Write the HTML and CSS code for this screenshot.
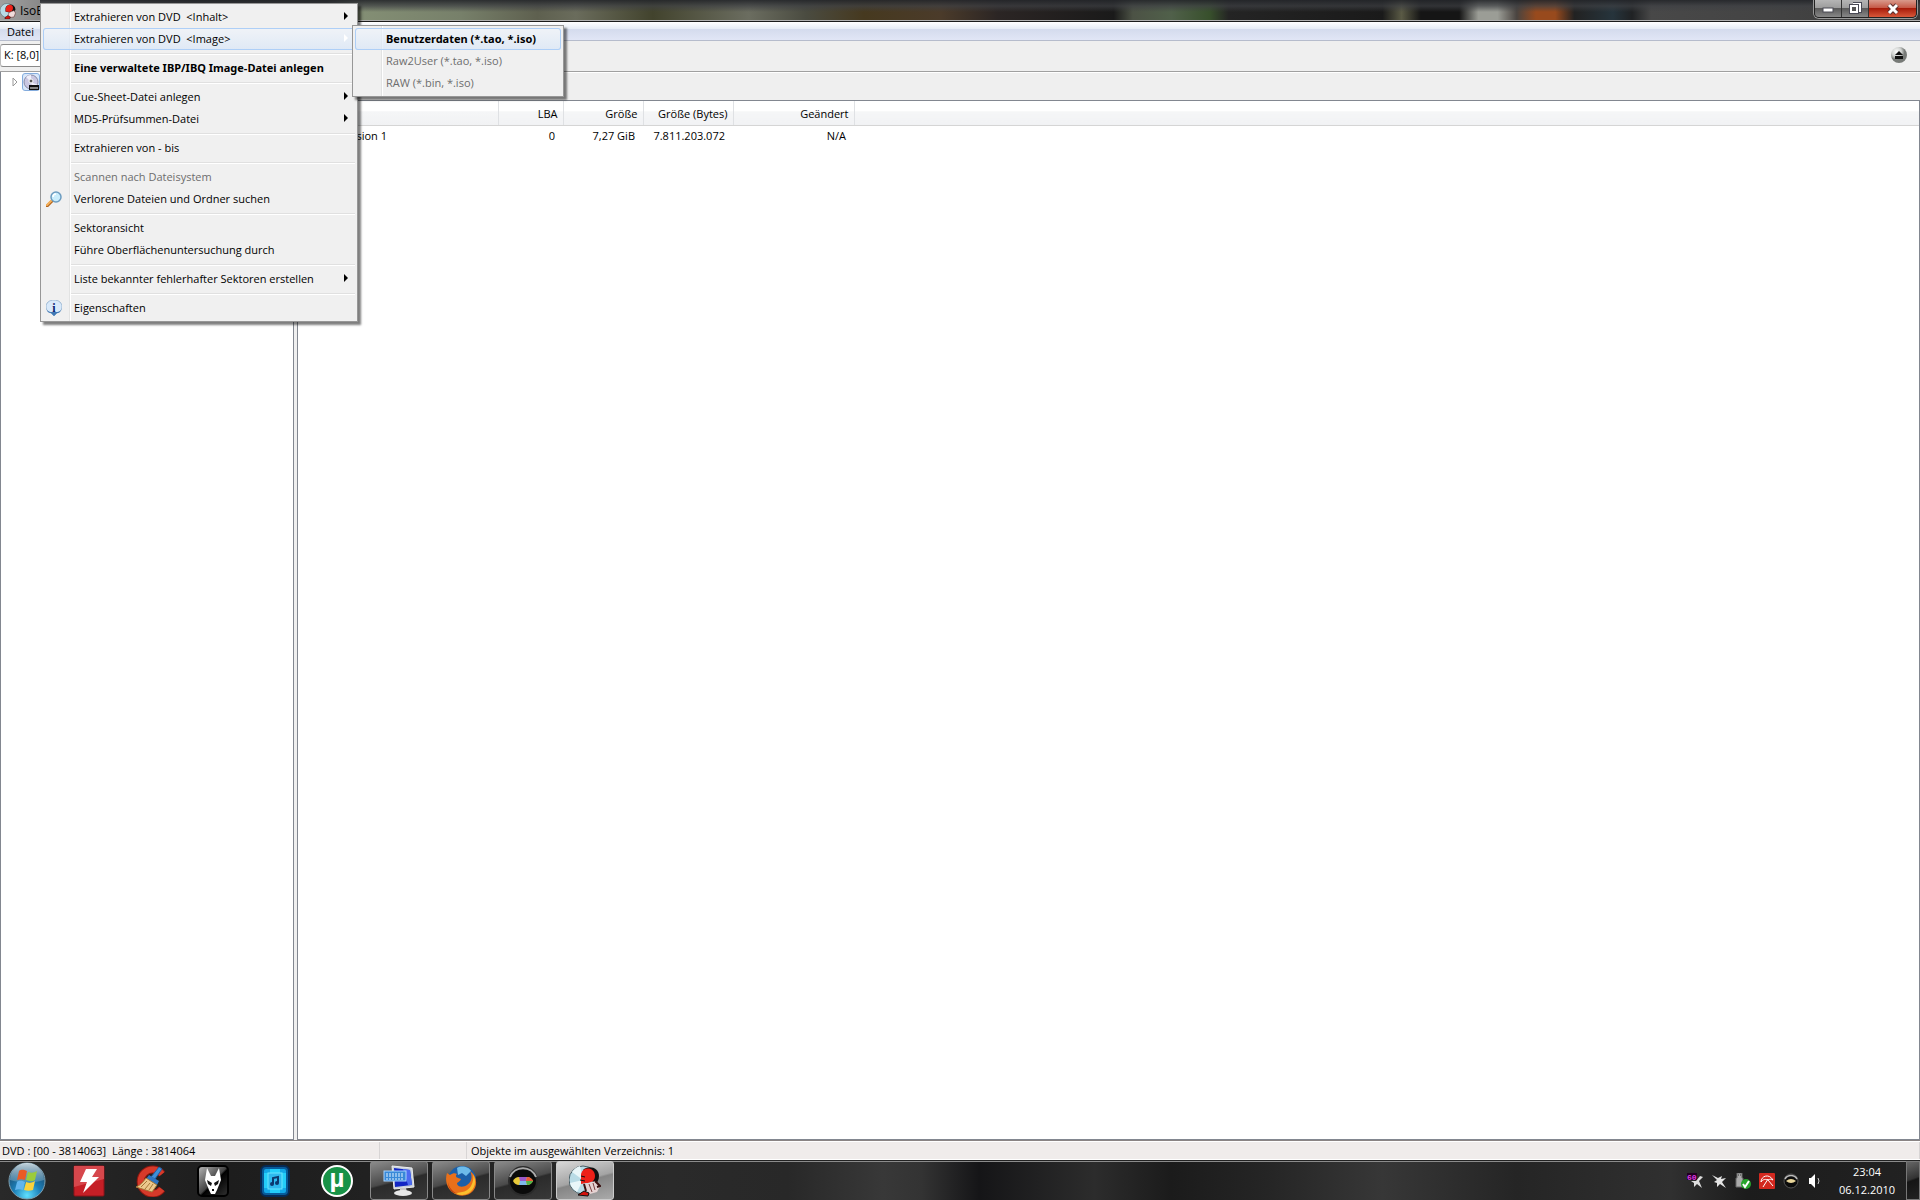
FILE: index.html
```html
<!DOCTYPE html>
<html lang="de">
<head>
  <meta charset="UTF-8">
  <meta name="viewport" content="width=device-width, initial-scale=1">
  <title>IsoBuster</title>
  <link rel="stylesheet" href="styles.css">
</head>
<body>

  <header class="titlebar">
    <svg class="app-icon" width="16" height="16" viewBox="0 0 32 32">
      <circle cx="14" cy="15" r="14" fill="#b9dbe6" stroke="#4b5f66"/>
      <path d="M11 10c3-10 19-10 20 3l-4 7-3-4-6 3-7-2z" fill="#111"/>
      <path d="M12 9c3-8 14-7 14 1 0 5-3 7-7 8l-8-1z" fill="#ee2018"/>
      <path d="M18 19l10-4 3 5-3 8-9 1-3-4z" fill="#f0dcdc" stroke="#5b2020"/>
      <path d="M10 29l6-4 5 3-2 4h-9z" fill="#d4120c" stroke="#111"/>
    </svg>
    <h1>IsoBuster</h1>
    <div class="window-buttons">
      <button class="minimize" aria-label="Minimieren">
        <svg width="12" height="10" viewBox="0 0 12 10"><rect x="1" y="4" width="10" height="4" fill="#fff" stroke="#4a4a55"/></svg>
      </button>
      <button class="restore" aria-label="Verkleinern">
        <svg width="13" height="13" viewBox="0 0 13 13"><path d="M4 2h7v7h-2" fill="none" stroke="#4a4a55" stroke-width="4"/><path d="M4 2h7v7h-2" fill="none" stroke="#fff" stroke-width="2"/><rect x="2" y="4" width="6" height="6" fill="#777" stroke="#4a4a55" stroke-width="4"/><rect x="2" y="4" width="6" height="6" fill="#555" stroke="#fff" stroke-width="2"/></svg>
      </button>
      <button class="close" aria-label="Schließen">
        <svg width="14" height="12" viewBox="0 0 14 12"><path d="M3 2l8 8M11 2l-8 8" stroke="#5a3030" stroke-width="5"/><path d="M3 2l8 8M11 2l-8 8" stroke="#fff" stroke-width="3"/></svg>
      </button>
    </div>
  </header>

  <nav class="menubar">
    <button>Datei</button>
  </nav>

  <div class="toolbar">
    <select class="drive" aria-label="Laufwerk">
      <option>K: [8,0]</option>
    </select>
    <button class="eject" aria-label="Auswerfen">
      <svg width="16" height="17" viewBox="0 0 16 17">
        <defs><radialGradient id="ejectBall" cx="35%" cy="30%"><stop offset="0" stop-color="#fff"/><stop offset="0.600" stop-color="#d0d2d0"/><stop offset="1" stop-color="#777a77"/></radialGradient></defs>
        <circle cx="8" cy="8" r="8" fill="url(#ejectBall)"/>
        <path d="M8 4l4 4H4zM4 9h8v3H4z" fill="#111"/>
      </svg>
    </button>
  </div>

  <main class="panes">
    <section class="tree">
      <div class="tree-item">
        <svg width="6" height="10" viewBox="0 0 6 10"><path d="M1 1l4 4-4 4z" fill="#fff" stroke="#999"/></svg>
        <span class="tree-disc">
          <svg width="16" height="16" viewBox="0 0 16 16">
            <circle cx="8" cy="8" r="7" fill="#c9c7e2" stroke="#8b8ba5"/>
            <path d="M8 8L3 3a7 7 0 0 1 5-2zM8 8l7 3a7 7 0 0 1-5 3z" fill="#f0effa"/>
            <circle cx="8" cy="7" r="2" fill="#555" stroke="#fff"/>
            <path d="M6 11h10v5H6z" fill="#111"/>
            <path d="M8 13v2M10 13v2M12 13v2M14 13v2" stroke="#fff"/>
          </svg>
        </span>
      </div>
    </section>

    <section class="content">
      <div class="pathbar"></div>
      <div class="files">
        <table>
          <colgroup>
            <col class="col-name"><col class="col-lba"><col class="col-size"><col class="col-bytes"><col class="col-date"><col>
          </colgroup>
          <thead>
            <tr><th></th><th>LBA</th><th>Größe</th><th>Größe (Bytes)</th><th>Geändert</th><th></th></tr>
          </thead>
          <tbody>
            <tr><td>Session 1</td><td>0</td><td>7,27 GiB</td><td>7.811.203.072</td><td>N/A</td><td></td></tr>
          </tbody>
        </table>
      </div>
    </section>
  </main>

  <footer class="statusbar">
    <span class="status-disc">DVD : [00 - 3814063]&nbsp; Länge : 3814064</span>
    <span class="status-empty"></span>
    <span class="status-count">Objekte im ausgewählten Verzeichnis: 1</span>
  </footer>

  <div class="menu context-menu">
    <button class="submenu">Extrahieren von DVD&nbsp; &lt;Inhalt&gt;</button>
    <button class="submenu active">Extrahieren von DVD&nbsp; &lt;Image&gt;</button>
    <hr>
    <button class="default">Eine verwaltete IBP/IBQ Image-Datei anlegen</button>
    <hr>
    <button class="submenu">Cue-Sheet-Datei anlegen</button>
    <button class="submenu">MD5-Prüfsummen-Datei</button>
    <hr>
    <button>Extrahieren von - bis</button>
    <hr>
    <button disabled>Scannen nach Dateisystem</button>
    <button>
      <svg width="16" height="16" viewBox="0 0 16 16">
        <path d="M1 15l6-6" stroke="#b5651d" stroke-width="3" stroke-linecap="round"/>
        <path d="M1 14l5-5" stroke="#f5b25c" stroke-width="2" stroke-linecap="round"/>
        <circle cx="10" cy="6" r="5" fill="#c9ecfb" stroke="#6c9cc0" stroke-width="1.500"/>
        <path d="M7 6a3 3 0 0 1 3-3" fill="none" stroke="#fff" stroke-width="1.500"/>
      </svg>
      Verlorene Dateien und Ordner suchen
    </button>
    <hr>
    <button>Sektoransicht</button>
    <button>Führe Oberflächenuntersuchung durch</button>
    <hr>
    <button class="submenu">Liste bekannter fehlerhafter Sektoren erstellen</button>
    <hr>
    <button>
      <svg width="16" height="16" viewBox="0 0 16 16">
        <path d="M8 0c5 0 8 3 8 7 0 3-2 5-5 6l-3 3-3-3C2 12 0 10 0 7c0-4 3-7 8-7z" fill="#d8e9fa" stroke="#9db9d4"/>
        <path d="M1 10c2 2 3 2 5 2h4c2 0 3 0 5-2-1 3-3 3-4 3l-3 3-3-3c-2 0-4-1-4-3z" fill="#3f78b4"/>
        <text x="8" y="12" text-anchor="middle" class="info-letter">i</text>
      </svg>
      Eigenschaften
    </button>
  </div>

  <div class="menu image-menu">
    <button class="default active">Benutzerdaten (*.tao, *.iso)</button>
    <button disabled>Raw2User (*.tao, *.iso)</button>
    <button disabled>RAW (*.bin, *.iso)</button>
  </div>

  <div class="taskbar">
    <button class="start" aria-label="Start">
      <svg width="40" height="38" viewBox="0 0 40 38">
        <defs>
          <radialGradient id="orb" cx="50%" cy="90%" r="85%"><stop offset="0" stop-color="#5fe0ff"/><stop offset="0.450" stop-color="#1c7fb8"/><stop offset="1" stop-color="#1b3e5c"/></radialGradient>
          <linearGradient id="orbShine" x1="0" y1="0" x2="0" y2="1"><stop offset="0" stop-color="#e4f0f5" stop-opacity="0.850"/><stop offset="1" stop-color="#8fb9cc" stop-opacity="0.350"/></linearGradient>
        </defs>
        <circle cx="20" cy="19" r="18" fill="url(#orb)" stroke="#7fa0b0"/>
        <path d="M3 18a17 17 0 0 1 34 0c-8 3-25 3-34 0z" fill="url(#orbShine)"/>
        <path d="M12 9c3-2 5-1 8 0l-2 9c-3-1-5-1-8 0z" fill="#ea5a24"/>
        <path d="M21 10c3 1 6 1 9-1l-2 9c-3 2-6 1-9 0z" fill="#9bcb3c"/>
        <path d="M10 20c3-2 5-1 8 0l-2 8c-3-1-5-1-8 0z" fill="#62b5ee"/>
        <path d="M19 20c3 1 6 1 9-1l-2 9c-3 1-6 1-9 0z" fill="#fbd23c"/>
      </svg>
    </button>

    <div class="pinned">
      <button aria-label="Flash">
        <svg width="32" height="32" viewBox="0 0 32 32">
          <rect x="1" y="1" width="30" height="30" rx="1" fill="#c51f26" stroke="#8c1318"/>
          <path d="M1 1h30v13L1 22z" fill="#d6474c"/>
          <path d="M13 4h11l-5 8h7L10 28l4-11H7z" fill="#fff"/>
        </svg>
      </button>
      <button aria-label="CCleaner">
        <svg width="32" height="32" viewBox="0 0 32 32">
          <path d="M27 9a12 12 0 1 0 0 15" fill="none" stroke="#8e1710" stroke-width="8"/>
          <path d="M27 9a12 12 0 1 0 0 15" fill="none" stroke="#d63a2a" stroke-width="6"/>
          <path d="M24 2l3 2-7 10-4-2z" fill="#3e8fd8" stroke="#1f5d9c"/>
          <path d="M14 10l10 6-2 4-11-6z" fill="#2f74bf"/>
          <path d="M11 13l11 7-5 7L1 22c5-2 7-5 10-9z" fill="#ecc88c" stroke="#a57838"/>
          <path d="M6 22l6-6M10 24l5-6M14 25l4-6" stroke="#a57838"/>
        </svg>
      </button>
      <button aria-label="foobar2000">
        <svg width="32" height="32" viewBox="0 0 32 32">
          <defs><linearGradient id="foo" x1="0" y1="0" x2="1" y2="1"><stop offset="0" stop-color="#bbb"/><stop offset="0.500" stop-color="#444"/><stop offset="0.550" stop-color="#000"/><stop offset="1" stop-color="#333"/></linearGradient></defs>
          <rect x="1" y="1" width="30" height="30" rx="4" fill="url(#foo)" stroke="#000" stroke-width="2"/>
          <path d="M10 3l4 8h4l4-8 2 12-4 10-2 4h-4l-2-4-4-10z" fill="#fff"/>
          <path d="M10 15l5 3-1 3-3-2zM22 15l-5 3 1 3 3-2z" fill="#111"/>
          <path d="M15 24h2v2h-2z" fill="#111"/>
        </svg>
      </button>
      <button aria-label="Musik">
        <svg width="32" height="32" viewBox="0 0 32 32">
          <rect x="2" y="1" width="28" height="30" rx="5" fill="#075c9b" stroke="#062a55" stroke-width="2"/>
          <rect x="5" y="4" width="22" height="24" rx="2" fill="#12a7e8"/>
          <path d="M11 4h10v4h6v15h-6v5H11v-5H5V8h6z" fill="#23cdfa"/>
          <rect x="9" y="8" width="14" height="16" fill="#2eb9ef" stroke="#6be5ff"/>
          <path d="M14 19v-6l5-1v6" fill="none" stroke="#0b3970" stroke-width="2"/>
          <circle cx="13" cy="19" r="2" fill="#0b3970"/><circle cx="18" cy="18" r="2" fill="#0b3970"/>
        </svg>
      </button>
      <button aria-label="µTorrent">
        <svg class="torrent" width="32" height="32" viewBox="0 0 32 32">
          <circle cx="16" cy="16" r="15" fill="#189247" stroke="#fff" stroke-width="2"/>
          <text x="16" y="22" text-anchor="middle" class="torrent-letter">µ</text>
        </svg>
      </button>
    </div>

    <div class="tasks">
      <button aria-label="Bildschirmtastatur">
        <svg width="32" height="32" viewBox="0 0 32 32">
          <path d="M9 1l20 2 2 19-20 2z" fill="#c9d2dc" stroke="#eee"/>
          <path d="M11 3l16 2 2 15-17 2z" fill="#1226c4"/>
          <path d="M20 4l7 1 2 15-4 0z" fill="#4c6bf0"/>
          <path d="M17 23h6l1 4h-7z" fill="#c8c8c8"/>
          <ellipse cx="20" cy="28" rx="9" ry="3" fill="#e8e8e8"/>
          <rect x="1" y="6" width="22" height="10" fill="#3889d8" stroke="#a8d4ff"/>
          <path d="M3 9h18M3 11h18M3 14h18" stroke="#e4f3ff" stroke-dasharray="2 1"/>
        </svg>
      </button>
      <button aria-label="Firefox">
        <svg width="32" height="32" viewBox="0 0 32 32">
          <circle cx="17" cy="15" r="14" fill="#1c5fa8"/>
          <path d="M12 3c5-3 12-1 14 3l-5 5-4-3-4 2z" fill="#6dbbea"/>
          <path d="M2 8l3 2c3-2 5-2 7-1-2 2-1 3 1 4l3 1c-1 3-4 3-4 5 2 4 7 3 10 1 6-4 5-10 3-14 7 5 8 14 3 20-5 6-15 6-21 1C1 22 0 14 2 8z" fill="#e9701a"/>
          <path d="M28 9c4 7 2 15-4 19-5 3-11 2-15 0 8 0 14-2 17-7 2-4 3-8 2-12z" fill="#fbc02d"/>
          <path d="M3 17c1 6 5 10 10 12-5 0-10-5-10-12z" fill="#b93b10"/>
        </svg>
      </button>
      <button aria-label="Rainlendar">
        <svg width="32" height="32" viewBox="0 0 32 32">
          <circle cx="16" cy="16" r="14" fill="#0a0a0a" stroke="#2a2a2a" stroke-width="2"/>
          <path d="M3 12a14 14 0 0 1 26 0" fill="none" stroke="#aaa" stroke-width="2"/>
          <path d="M6 16q2-4 6-4h8q4 0 6 4-2 4-6 4h-8q-4 0-6-4z" fill="#e8c93a"/>
          <path d="M12 12h8l-1 4h-6z" fill="#9a58c8"/>
          <path d="M20 12q4 0 6 4h-7z" fill="#e85a3a"/>
          <path d="M13 16h6l1 4h-8z" fill="#7fb8ec"/>
          <path d="M19 16h7q-2 4-6 4z" fill="#51b44a"/>
        </svg>
      </button>
      <button class="current" aria-label="IsoBuster">
        <svg width="32" height="32" viewBox="0 0 32 32">
          <circle cx="14" cy="15" r="14" fill="#b9dbe6" stroke="#4b5f66"/>
          <path d="M14 15L3 7a14 14 0 0 1 8-6zM14 15l-6 12a14 14 0 0 1-7-9z" fill="#e9f6f9"/>
          <path d="M14 5c5-5 16-3 16 6 0 4-2 7-4 8l-4-4z" fill="#111"/>
          <path d="M12 9c2-8 14-7 14 2 0 5-4 7-9 7l-5 1z" fill="#ee2018"/>
          <path d="M11 15l5 1M12 11l4 1" stroke="#111" stroke-width="1"/>
          <path d="M15 19l6-1 5-2 5 5-3 6-7 2-5-5z" fill="#e6d2d2"/>
          <path d="M15 19l2 7M26 16l5 5-3 1" fill="none" stroke="#3a1010" stroke-width="2"/>
          <path d="M20 19l3 8M24 18l2 7" fill="none" stroke="#7a4040"/>
          <path d="M9 30l6-4 5 2-1 3z" fill="#d4120c" stroke="#111"/>
        </svg>
      </button>
    </div>

    <div class="tray">
      <svg width="16" height="16" viewBox="0 0 16 16">
        <path d="M16 4l-4 4 3 7-5-4-3 3v-4l-3-2h5l4-5z" fill="#ddd"/>
        <rect width="10" height="7" fill="#210021"/>
        <text x="0" y="7" class="fps">60</text>
      </svg>
      <svg width="16" height="16" viewBox="0 0 16 16"><path d="M1 2l6 3 4-2-1 3 5-1-4 4 4 6-6-4-3 3v-4l-3-1 3-2z" fill="#e4e4e4"/></svg>
      <svg width="16" height="16" viewBox="0 0 16 16">
        <path d="M2 0h5v5h1v9H1V5h1z" fill="#aaa" stroke="#666"/><path d="M3 2h1M5 2h1" stroke="#333"/>
        <circle cx="11" cy="11" r="5" fill="#27a52b"/><path d="M8 11l2 3 4-6" fill="none" stroke="#fff" stroke-width="2"/>
      </svg>
      <svg width="16" height="16" viewBox="0 0 16 16">
        <rect width="16" height="16" rx="1" fill="#d3281f"/>
        <path d="M2 9C2 3 10 0 14 7c-2-1-3-1-5 0C7 6 4 6 2 9z" fill="none" stroke="#fff"/>
        <path d="M9 6l-5 8M9 7l5 6" fill="none" stroke="#fff"/>
      </svg>
      <svg width="16" height="16" viewBox="0 0 16 16">
        <circle cx="8" cy="8" r="7" fill="#0b0b0b" stroke="#555"/>
        <path d="M2 6a7 7 0 0 1 12 0" fill="none" stroke="#bbb" stroke-width="1.500"/>
        <path d="M3 8q5-4 10 0-5 4-10 0z" fill="#e9d69a"/>
      </svg>
      <svg width="16" height="16" viewBox="0 0 16 16"><path d="M2 5h2l4-4v14l-4-4H2z" fill="#fff"/><path d="M11 5q2 3 0 6" fill="none" stroke="#ccc"/></svg>
    </div>
    <div class="clock"><time>23:04</time><time>06.12.2010</time></div>
    <button class="show-desktop" aria-label="Desktop anzeigen"></button>
  </div>

</body>
</html>
```
FILE: styles.css
```css
* {
  box-sizing: border-box;
}

body {
  display: flex;
  flex-direction: column;
  height: 100vh;
  margin: 0;
  overflow: hidden;
  background: #efefef;
  color: #000;
  font-family: "Open Sans", "Noto Sans", sans-serif;
  font-size: 11px;
  line-height: 18px;
}

button, select {
  margin: 0;
  padding: 0;
  border: 0;
  background: none;
  color: inherit;
  font: inherit;
}

svg {
  display: block;
  flex: none;
}

/* title bar */
.titlebar {
  display: flex;
  height: 22px;
  flex: none;
  border-bottom: 1px solid #1b1b1b;
  box-shadow: inset 0 -1px #b0b0b0;
  background:
    linear-gradient(to bottom, rgba(36, 38, 42, 0.9) 0, rgba(62, 64, 68, 0.7) 6px, rgba(60, 60, 60, 0) 12px) 40px 0 no-repeat,
    linear-gradient(to right, #a0a0a0 0%, #8a8a8a 2%, #222 10%, #222 17%, #838e74 19%, #77806a 24%, #5e604f 28%, #6a6c5c 30%, #42432d 34%, #6b6d60 39%, #4a4b40 42%, #46391f 45%, #4b3b2a 49%, #2b2524 52%, #1a1a1a 58%, #4c5245 59%, #50604a 61%, #38502c 63%, #242424 64%, #1a1a1a 72%, #5a5a45 73%, #151515 74%, #151515 76%, #9b9d96 77%, #9b9d96 78%, #4a4440 79%, #984a1d 80%, #984a1d 81%, #222 82%, #26343c 84%, #202224 85%, #484848 86%, #444 92%, #3a3a3a 100%);
}

.app-icon {
  margin: 3px 4px 0 0;
}

h1 {
  margin: 2px 0 0;
  font-size: 12px;
  font-weight: normal;
}

.window-buttons {
  display: flex;
  height: 18px;
  margin: 0 3px 0 auto;
  border: 1px solid #222;
  border-top: 0;
  border-radius: 0 0 5px 5px;
  box-shadow: 0 0 0 1px #999;
  overflow: hidden;
}

.window-buttons button {
  display: grid;
  place-items: center;
  width: 27px;
  border-right: 1px solid #333;
  background: linear-gradient(#b5b5b5, #9d9d9d 45%, #5b5b5b 50%, #888);
}

.window-buttons .close {
  width: 47px;
  border: 0;
  background: linear-gradient(#d99a8c, #c65a48 45%, #a81c0a 50%, #d8583a);
}

/* menu bar and tool bars */
.menubar {
  display: flex;
  height: 19px;
  flex: none;
  padding-top: 1px;
  border-bottom: 1px solid #b6bccc;
  background: linear-gradient(#fff, #e5ebf5 7px, #d4dbed 7px, #e1e6f6);
}

.menubar button {
  padding: 0 7px;
}

.toolbar {
  display: flex;
  align-items: center;
  justify-content: space-between;
  height: 31px;
  flex: none;
  padding: 0 13px 2px 0;
  border-bottom: 1px solid #a0a0a0;
}

.drive {
  width: 300px;
  height: 23px;
  padding-left: 3px;
  border: 1px solid #8a8a8a;
  border-left-color: #bbb;
  border-radius: 3px;
  background: #fff;
  appearance: none;
}

/* tree and file list */
.panes {
  display: flex;
  flex: 1;
  gap: 3px;
  border-bottom: 1px solid #8a8484;
}

.tree {
  width: 294px;
  padding-top: 1px;
  border: 1px solid #828790;
  border-top: 0;
  background: #fff;
}

.tree-item {
  display: flex;
  align-items: center;
  gap: 4px;
  padding-left: 11px;
}

.tree-disc {
  border: 1px solid #84acdd;
  border-radius: 3px;
  background: #d9e8fb;
}

.content {
  display: flex;
  flex: 1;
  flex-direction: column;
}

.pathbar {
  height: 28px;
  border-top: 1px solid #fff;
}

.files {
  flex: 1;
  border: 1px solid #828790;
  background: #fff;
}

table {
  width: 100%;
  table-layout: fixed;
  border-collapse: collapse;
}

.col-name { width: 200px; }
.col-lba { width: 65px; }
.col-size { width: 80px; }
.col-bytes { width: 90px; }
.col-date { width: 121px; }

th, td {
  height: 24px;
  padding: 2px 5px 0;
  font-weight: normal;
  text-align: right;
  white-space: nowrap;
}

th {
  border-right: 1px solid #dfe1e4;
  border-bottom: 1px solid #d5d5d5;
  background: linear-gradient(#fff 40%, #f5f6f7 45%, #f1f2f4);
}

th:last-child {
  border-right: 0;
}

td {
  height: 22px;
  padding: 0 8px;
}

td:first-child {
  padding-left: 41px;
  text-align: left;
}

/* status bar */
.statusbar {
  display: flex;
  height: 19px;
  flex: none;
  border-top: 1px solid #fff;
  border-bottom: 1px solid #fff;
  background: #f0eceb;
}

.statusbar span {
  padding-left: 4px;
  border-right: 1px solid #d8d5d5;
}

.statusbar .status-disc {
  width: 380px;
  padding-left: 2px;
}

.statusbar .status-empty {
  width: 87px;
}

.statusbar .status-count {
  flex: 1;
}

/* popup menus */
.menu {
  position: absolute;
  display: flex;
  flex-direction: column;
  padding: 2px;
  border: 1px solid #979797;
  background: linear-gradient(to right, transparent 28px, #e2e3e3 28px, #e2e3e3 29px, #fff 29px, #fff 30px, transparent 30px) #f0f0f0;
  box-shadow: 3px 3px 2px rgba(0, 0, 0, 0.5);
}

.context-menu {
  top: 3px;
  left: 40px;
  width: 318px;
}

.image-menu {
  top: 25px;
  left: 352px;
  width: 212px;
}

.menu button {
  display: flex;
  align-items: center;
  height: 22px;
  padding-left: 31px;
  border-radius: 3px;
  text-align: left;
  white-space: nowrap;
}

.menu button:disabled {
  color: #6d6d6d;
}

.menu .default {
  font-family: "Noto Sans", "Open Sans", sans-serif;
  font-weight: bold;
}

.menu .active {
  background: linear-gradient(rgba(240, 245, 252, 0.6), rgba(216, 230, 248, 0.7));
  box-shadow: inset 0 0 0 1px #aecff7;
}

.menu svg {
  margin: 0 12px 0 -28px;
}

.submenu::after {
  width: 0;
  margin: 0 7px 2px auto;
  border: 4px solid transparent;
  border-right: 0;
  border-left-color: #000;
  content: "";
}

.submenu.active::after {
  border-left-color: #fff;
}

.menu hr {
  width: auto;
  height: 2px;
  margin: 3px 0 2px 28px;
  border: 0;
  border-top: 1px solid #e0e0e0;
  background: #fff;
}

.info-letter {
  fill: #0b1e70;
  font: bold 12px "Liberation Serif", serif;
}

/* taskbar */
.taskbar {
  display: flex;
  height: 40px;
  flex: none;
  border-top: 1px solid #222;
  box-shadow: inset 0 1px #8b8b8b;
  background: linear-gradient(to right, #292929, #1d1d1d 12%, #2a2a2a 35%, #282828 41%, #383838 46%, #333 48%, #151517 51%, #2c2c2c 57%, #1b1b1b 61%, #252525 66%, #373737 72%, #252525 79%, #303030 87%, #1c1c1c 91%, #222);
}

.start {
  margin-left: 7px;
}

.pinned {
  display: flex;
  gap: 30px;
  margin-left: 26px;
}

.tasks {
  display: flex;
  gap: 4px;
  margin-left: 17px;
}

.tasks button {
  display: grid;
  place-items: center;
  width: 58px;
  border: 1px solid #888;
  border-radius: 3px;
  background: linear-gradient(165deg, #8b8b8b, #4a4a4a 48%, #2b2b2b 52%, #383838);
}

.tasks .current {
  border-color: #ccc;
  background: linear-gradient(165deg, #d8d8d8, #a4a4a4 48%, #858585 52%, #aaa);
}

.torrent {
  overflow: visible;
}

.torrent-letter {
  fill: #fff;
  font: bold 26px "Liberation Sans", sans-serif;
}

.tray {
  display: flex;
  align-items: center;
  gap: 8px;
  margin: 0 5px 0 auto;
}

.fps {
  fill: #e23be8;
  font: bold 8px "Liberation Mono", monospace;
}

.clock {
  display: flex;
  flex-direction: column;
  width: 78px;
  padding-top: 2px;
  color: #fff;
  text-align: center;
}

.show-desktop {
  width: 14px;
  border: 1px solid #777;
  background: linear-gradient(160deg, #666, #333 45%, #151515 50%, #222);
}
```
